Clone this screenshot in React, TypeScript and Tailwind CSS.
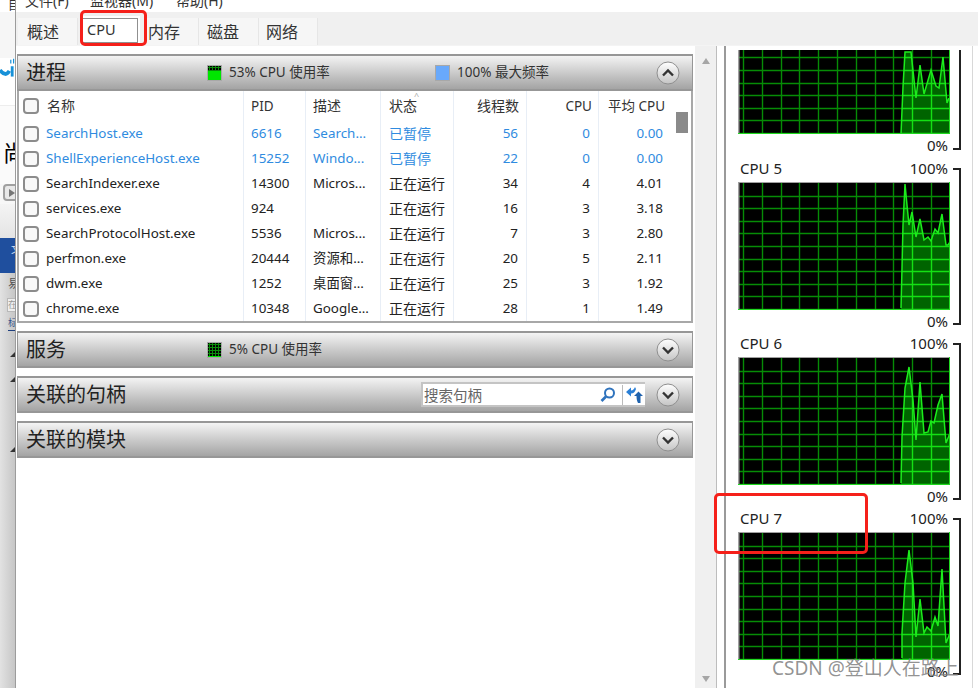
import { useId } from 'react'

const rows = [
  { name: 'SearchHost.exe', pid: '6616', desc: 'Search...', state: '已暂停', threads: '56', cpu: '0', avg: '0.00', blue: true },
  { name: 'ShellExperienceHost.exe', pid: '15252', desc: 'Windo...', state: '已暂停', threads: '22', cpu: '0', avg: '0.00', blue: true },
  { name: 'SearchIndexer.exe', pid: '14300', desc: 'Micros...', state: '正在运行', threads: '34', cpu: '4', avg: '4.01' },
  { name: 'services.exe', pid: '924', desc: '', state: '正在运行', threads: '16', cpu: '3', avg: '3.18' },
  { name: 'SearchProtocolHost.exe', pid: '5536', desc: 'Micros...', state: '正在运行', threads: '7', cpu: '3', avg: '2.80' },
  { name: 'perfmon.exe', pid: '20444', desc: '资源和...', state: '正在运行', threads: '20', cpu: '5', avg: '2.11' },
  { name: 'dwm.exe', pid: '1252', desc: '桌面窗...', state: '正在运行', threads: '25', cpu: '3', avg: '1.92' },
  { name: 'chrome.exe', pid: '10348', desc: 'Google...', state: '正在运行', threads: '28', cpu: '1', avg: '1.49' },
]

const cols = 'grid grid-cols-[225px_62px_75px_73px_73px_72px_73px]'

function Checkbox() {
  return <span className="block w-[16px] h-[16px] rounded-[4px] border-2 border-[#8c8c8c] bg-[#f8f8f8]" />
}

function Chevron({ up }: { up?: boolean }) {
  return (
    <svg width="24" height="24" viewBox="0 0 24 24" className="shrink-0">
      <defs>
        <linearGradient id={up ? 'btnUp' : 'btnDown'} x1="0" y1="0" x2="0" y2="1">
          <stop offset="0" stopColor="#ffffff" />
          <stop offset="1" stopColor="#c4c4c4" />
        </linearGradient>
      </defs>
      <circle cx="12" cy="12" r="11" fill={`url(#${up ? 'btnUp' : 'btnDown'})`} stroke="#8f8f8f" strokeWidth="1" />
      <path d={up ? 'M7 14.5 L12 9.5 L17 14.5' : 'M7 9.5 L12 14.5 L17 9.5'} fill="none" stroke="#333" strokeWidth="2.4" />
    </svg>
  )
}

function Meter({ level }: { level: number }) {
  const top = 16 - level
  return (
    <svg width="15" height="16" viewBox="0 0 15 16" className="shrink-0">
      <rect width="15" height="16" fill="#000" />
      <path d="M0 2.5H15M0 5.5H15M0 8.5H15M0 11.5H15M2.5 0V16M5.5 0V16M8.5 0V16M11.5 0V16" stroke="#0a8a0a" strokeWidth="1" />
      <rect y={top} width="15" height={level} fill="#00e600" />
      <rect x="0.5" y="0.5" width="14" height="15" fill="none" stroke="#a8a8a8" />
    </svg>
  )
}

function SectionBar({ title, children }: { title: string; children?: React.ReactNode }) {
  return (
    <div className="flex items-center h-[37px] pl-[8px] pr-[12px] border border-[#979797] border-t-2 border-b-2 bg-linear-to-b from-[#f4f4f4] to-[#a4a4a4]">
      <span className="w-[181px] shrink-0 text-[20px] leading-none text-[#222]">{title}</span>
      <div className="flex-1 flex items-center min-w-0">{children}</div>
    </div>
  )
}

function Graph({ top, points, crop }: { top: number; points: number[][]; crop?: number }) {
  const id = useId()
  const pts = points.map(([x, y]) => [x - 738, y - top])
  const line = pts.map((p) => p.join(',')).join(' ')
  const fill = `${line} 212,128 ${pts[0][0]},128`
  const y0 = crop ?? 0
  const h = 128 - y0
  const vs = Array.from({ length: 11 }, (_, i) => Math.round(5 + i * 18.8) + 0.5)
  const hs = Array.from({ length: 10 }, (_, i) => Math.round(127 - i * 12.6) + 0.5)
  const grid = (
    <>
      {vs.map((x) => <line key={x} x1={x} x2={x} y1="0" y2="128" />)}
      {hs.map((y) => <line key={y} x1="0" x2="212" y1={y} y2={y} />)}
    </>
  )
  return (
    <svg width="212" height={h} viewBox={`0 ${y0} 212 ${h}`} className="block">
      <defs>
        <clipPath id={id}><polygon points={fill} /></clipPath>
      </defs>
      <rect width="212" height="128" fill="#000" />
      <g stroke="#068c06" strokeWidth="1.4">{grid}</g>
      <polygon points={fill} fill="#006400" />
      <g stroke="#14e014" strokeWidth="1.4" clipPath={`url(#${id})`}>{grid}</g>
      <polyline points={line} fill="none" stroke="#1cec1c" strokeWidth="1.5" />
      <path d="M0.5 128V0H212" fill="none" stroke="#a0a0a0" strokeWidth="2" />
      <path d="M0 127.5H211.5V0" fill="none" stroke="#20d820" strokeWidth="1" />
    </svg>
  )
}

function CpuBlock({ title, top, points }: { title: string; top: number; points: number[][] }) {
  return (
    <div className="flex">
      <div className="w-[212px]">
        <div className="h-[24px] flex items-start justify-between text-[15px] leading-[21px] text-[#222] pr-[2px]">
          <span className="pl-[2px]">{title}</span>
          <span>100%</span>
        </div>
        <Graph top={top} points={points} />
        <div className="h-[23px] text-right text-[15px] leading-[22px] text-[#222] pr-[2px]">0%</div>
      </div>
      <div className="ml-[3px] mt-[10px] w-[8px] h-[157px] border-t-2 border-r-2 border-b-2 border-[#222]" />
    </div>
  )
}

const chart4 = [[901, 134], [903, 87], [905, 52], [911, 52], [916, 98], [920, 65], [924, 94], [931, 70], [936, 86], [939, 88], [943, 57], [947, 103], [949, 98]]
const chart5 = [[901, 308], [902, 268], [903, 225], [905, 184], [907, 205], [909, 225], [912, 212], [916, 237], [920, 219], [924, 240], [928, 237], [931, 241], [935, 229], [938, 233], [942, 214], [946, 245], [948, 245], [950, 242]]
const chart6 = [[901, 483], [902, 437], [905, 388], [909, 367], [913, 400], [916, 440], [920, 382], [924, 433], [928, 432], [931, 421], [934, 423], [938, 405], [942, 394], [946, 443], [950, 433]]
const chart7 = [[902, 658], [902, 633], [905, 583], [909, 550], [913, 583], [916, 637], [920, 599], [924, 633], [927, 627], [931, 631], [935, 617], [938, 626], [942, 569], [946, 643], [950, 633]]

function LeftStrip() {
  return (
    <div className="w-[16px] shrink-0 flex flex-col border-r border-[#9c9c9c] overflow-hidden text-[#333]">
      <div className="h-[12px] bg-white text-[12px] leading-none pl-[8px] overflow-hidden">目</div>
      <div className="h-[46px] bg-[#f6f6f6]" />
      <div className="h-[24px] bg-white flex items-center justify-end overflow-hidden">
        <svg width="16" height="24" viewBox="0 0 16 24">
          <path d="M0 12 Q6 20 10 13" fill="none" stroke="#1791d8" strokeWidth="4" />
          <path d="M13 8V19" stroke="#1791d8" strokeWidth="3" />
          <path d="M11.5 1V5M14.5 0V5" stroke="#1791d8" strokeWidth="1.3" />
        </svg>
      </div>
      <div className="h-[24px] bg-white border-b border-[#ededed]" />
      <div className="h-[34px] bg-[#fbfbfb]" />
      <div className="h-[24px] bg-[#fbfbfb] text-[22px] leading-[24px] text-black pl-[3px] whitespace-nowrap">尚</div>
      <div className="h-[20px] bg-[#fafafa]" />
      <div className="h-[20px] bg-[#f7f7f7] pl-[3px]">
        <div className="w-[20px] h-[17px] rounded-[4px] border-2 border-[#a0a0a0] bg-[#e8e8e8] flex items-center pl-[4px]">
          <span className="w-0 h-0 border-y-[4px] border-y-transparent border-l-[6px] border-l-[#777]" />
        </div>
      </div>
      <div className="h-[34px] bg-linear-to-b from-[#f4f4f4] to-[#e4e4e4]" />
      <div className="h-[35px] bg-[#1f4f9e] text-[10px] leading-[14px] text-[#d5e2f5] pl-[11px] pt-[4px]">文</div>
      <div className="flex-1 bg-linear-to-r from-[#e2e2e2] to-[#c6c6c6]">
        <div className="pl-[8px] pt-[5px] text-[12px] leading-none text-[#555]">易</div>
        <div className="mt-[8px] ml-[7px] w-[12px] h-[14px] border border-[#b8b8b8] bg-[#eee] text-[9px] leading-[12px] text-[#999]">在</div>
        <div className="mt-[5px] pl-[8px] text-[9px] leading-[12px] text-[#33508a]">标</div>
        <div className="mt-[1px] ml-[8px] h-[1px] bg-[#1f3f7e]" />
        <div className="mt-[21px] ml-[10px] w-0 h-0 border-l-[5px] border-l-transparent border-b-[5px] border-b-[#333]" />
        <div className="mt-[20px] ml-[10px] w-0 h-0 border-l-[5px] border-l-transparent border-b-[5px] border-b-[#333]" />
        <div className="mt-[65px] ml-[10px] w-0 h-0 border-l-[5px] border-l-transparent border-b-[5px] border-b-[#333]" />
      </div>
    </div>
  )
}

export default function App() {
  return (
    <div className="relative w-[978px] h-[688px] overflow-hidden bg-white flex font-['Noto_Sans','Noto_Sans_CJK_SC',sans-serif] text-[14px] text-[#222]">
      <LeftStrip />
      <div className="flex-1 min-w-0 flex flex-col">
        {/* menu, cut off by the top edge */}
        <div className="h-[12px] overflow-hidden flex items-end gap-[24px] pl-[9px] text-[14px] leading-[20px] text-[#333] pb-[1px]">
          <span className="w-[41px] whitespace-nowrap">文件(F)</span>
          <span className="w-[62px] whitespace-nowrap">监视器(M)</span>
          <span className="whitespace-nowrap">帮助(H)</span>
        </div>

        <div className="h-[33px] bg-[#f0f0f0] flex items-end pl-[2px] text-[16px] text-[#333]">
          <div className="w-[60px] h-[27px] bg-[#f6f6f6] border-r border-[#e6e6e6] pl-[9px] leading-[28px]">概述</div>
          <div className="ml-[2px] w-[60px] h-[29px] bg-white relative pl-[7px] text-[14.5px] leading-[26px]">
            CPU
            <span className="absolute left-[2px] top-[2px] right-[2px] bottom-[2px] border border-[#909090]" />
          </div>
          <div className="ml-[6px] w-[53px] h-[27px] bg-[#f6f6f6] border-r border-[#e6e6e6] pl-[2px] leading-[28px]">内存</div>
          <div className="w-[60px] h-[27px] bg-[#f6f6f6] border-r border-[#e6e6e6] pl-[8px] leading-[28px]">磁盘</div>
          <div className="w-[59px] h-[27px] bg-[#f6f6f6] border-r border-[#e6e6e6] pl-[7px] leading-[28px]">网络</div>
        </div>

        <div className="flex-1 min-h-0 flex border-t border-[#f4f4f4]">
          <div className="w-[678px] shrink-0 pl-[1px] pr-[1px] pt-[8px] flex flex-col gap-[8px]">
            <div>
              <SectionBar title="进程">
                <span className="w-[228px] flex items-center gap-[7px] text-[13.5px] text-[#333]"><Meter level={10} />53% CPU 使用率</span>
                <span className="flex-1 flex items-center gap-[7px] text-[13.5px] text-[#333]">
                  <span className="w-[15px] h-[16px] bg-[#69a9fb] border border-[#a8a8a8]" />
                  100% 最大频率
                </span>
                <Chevron up />
              </SectionBar>
              <div className="flex h-[232px] border border-t-0 border-x-2 border-b-2 border-[#a8a8a8]">
                <div className="flex-1 min-w-0">
                  <div className={`${cols} h-[30px] text-[#333] leading-[30px]`}>
                    <div className="border-r border-[#e8eef6] flex items-center pl-[4px] gap-[8px]"><Checkbox />名称</div>
                    <div className="border-r border-[#e8eef6] pl-[7px] text-[13.5px]">PID</div>
                    <div className="border-r border-[#e8eef6] pl-[7px]">描述</div>
                    <div className="border-r border-[#e8eef6] pl-[8px] relative">
                      状态
                      <span className="absolute left-[33px] -top-[10px] text-[9px] text-[#aaa]">^</span>
                    </div>
                    <div className="border-r border-[#e8eef6] pr-[7px] text-right">线程数</div>
                    <div className="border-r border-[#e8eef6] pr-[6px] text-right text-[13.5px]">CPU</div>
                    <div className="pr-[7px] text-right text-[13.5px]">平均 CPU</div>
                  </div>
                  {rows.map((r) => (
                    <div key={r.name} className={`${cols} h-[25px] leading-[25px] text-[13.4px] ${r.blue ? 'text-[#2f8be0]' : 'text-[#222]'}`}>
                      <div className="border-r border-[#e8eef6] flex items-center pl-[4px] gap-[7px] whitespace-nowrap"><Checkbox />{r.name}</div>
                      <div className="border-r border-[#e8eef6] pl-[7px]">{r.pid}</div>
                      <div className="border-r border-[#e8eef6] pl-[7px] whitespace-nowrap overflow-hidden">{r.desc}</div>
                      <div className="border-r border-[#e8eef6] pl-[8px] text-[14px]">{r.state}</div>
                      <div className="border-r border-[#e8eef6] pr-[8px] text-right">{r.threads}</div>
                      <div className="border-r border-[#e8eef6] pr-[8px] text-right">{r.cpu}</div>
                      <div className="pr-[9px] text-right">{r.avg}</div>
                    </div>
                  ))}
                </div>
                <div className="w-[21px] shrink-0 pt-[21px] pl-[6px]">
                  <div className="w-[12px] h-[21px] bg-[#8a8a8a]" />
                </div>
              </div>
            </div>

            <SectionBar title="服务">
              <span className="flex-1 flex items-center gap-[7px] text-[13.5px] text-[#333]"><Meter level={2} />5% CPU 使用率</span>
              <Chevron />
            </SectionBar>

            <SectionBar title="关联的句柄">
              <div className="flex-1 flex justify-end pr-[11px]">
                <div className="w-[224px] h-[25px] bg-white border-2 border-[#c4c4c4] border-r-0 flex items-center pl-[1px] text-[14.5px] leading-[25px] text-[#666]">
                  <span className="flex-1 pt-[1px]">搜索句柄</span>
                  <svg width="18" height="18" viewBox="0 0 18 18" className="mr-[5px]">
                    <circle cx="10.5" cy="7" r="4.5" fill="none" stroke="#2f73bd" strokeWidth="2" />
                    <path d="M7 10.5 L2.5 15" stroke="#2f73bd" strokeWidth="2.6" />
                  </svg>
                  <span className="w-px h-[20px] bg-[#bbb]" />
                  <svg width="21" height="20" viewBox="0 0 21 20" className="ml-[1px]">
                    <path d="M2 7 L7 2.5 V5.5 C9 5.5 10 4 11 2 L12 4 C11 7 9.5 8.5 7 8.5 V11.5 Z" fill="#2a7fd6" />
                    <path d="M19 11 L14.5 6.5 L10 11 H12.5 C12.5 14 13 16 14 18 H16.5 V11 Z" fill="#1f62ad" />
                  </svg>
                </div>
              </div>
              <Chevron />
            </SectionBar>

            <SectionBar title="关联的模块">
              <div className="flex-1" />
              <Chevron />
            </SectionBar>
          </div>

          <div className="w-[22px] shrink-0 ml-[1px] bg-[#f0f0f0] border-r border-[#bdbdbd] flex flex-col items-center justify-between pt-[12px] pb-[6px] -mr-px">
            <span className="w-0 h-0 border-x-[4px] border-x-transparent border-b-[6px] border-b-[#a6a6a6]" />
            <span className="w-0 h-0 border-x-[4px] border-x-transparent border-t-[6px] border-t-[#a6a6a6]" />
          </div>

          <div className="ml-[8px] w-[249px] shrink-0 border-l-2 border-r border-l-[#9a9a9a] border-r-[#d8d8d8] pl-[12px] pt-[4px] overflow-hidden">
            <div className="flex">
              <div className="w-[212px]">
                <Graph top={6} points={chart4} crop={44} />
                <div className="h-[24px] text-right text-[15px] leading-[23px] pr-[2px]">0%</div>
              </div>
              <div className="ml-[3px] w-[8px] h-[100px] border-r-2 border-b-2 border-[#222]" />
            </div>
            <CpuBlock title="CPU 5" top={182} points={chart5} />
            <CpuBlock title="CPU 6" top={357} points={chart6} />
            <CpuBlock title="CPU 7" top={532} points={chart7} />
          </div>
        </div>
      </div>

      {/* annotations drawn over the screenshot */}
      <div className="absolute left-[80px] top-[10px] w-[67px] h-[36px] rounded-[5px] border-[3px] border-[#f5201a]" />
      <div className="absolute left-[714px] top-[493px] w-[154px] h-[61px] rounded-[5px] border-[3px] border-[#f5201a]" />
      <div className="absolute left-[772px] top-[655px] whitespace-nowrap text-[19px] leading-[26px] text-[#808080]/85">CSDN @登山人在路上</div>
    </div>
  )
}
